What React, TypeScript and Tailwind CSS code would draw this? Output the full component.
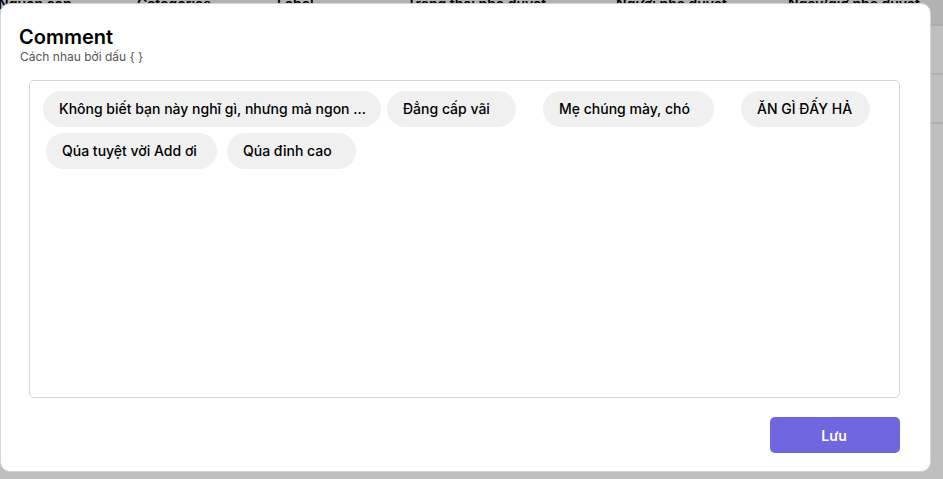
import React from 'react';

const columns = [
  { label: 'Nguồn cấp', width: 'w-[139px]' },
  { label: 'Categories', width: 'w-[140px]' },
  { label: 'Label', width: 'w-[130px]' },
  { label: 'Trạng thái phê duyệt', width: 'w-[209px]' },
  { label: 'Người phê duyệt', width: 'w-[172px]' },
  { label: 'Ngày/giờ phê duyệt', width: '' },
];

function Chip({ text, width }: { text: string; width: string }) {
  return (
    <li
      className={`flex h-9 shrink-0 items-center whitespace-nowrap rounded-full bg-[#f0f0f0] px-4 text-sm font-medium text-black ${width}`}
    >
      {text}
    </li>
  );
}

function BackgroundTable() {
  return (
    <div className="-ml-0.5">
      <table aria-hidden="true" className="w-full table-fixed border-collapse">
        <thead>
          <tr className="h-[25px] border-b-2 border-[#acacac] bg-[#b2b2b3]">
            {columns.map((column) => (
              <th
                key={column.label}
                className={`whitespace-nowrap p-0 text-left align-top text-sm leading-[8px] font-semibold text-black ${column.width}`}
              >
                {column.label}
              </th>
            ))}
          </tr>
        </thead>
        <tbody>
          <tr className="h-[49px] border-b-2 border-[#b0b0b0]">
            <td colSpan={6} />
          </tr>
          <tr className="h-[49px] border-b-2 border-[#b0b0b0]">
            <td colSpan={6} />
          </tr>
        </tbody>
      </table>
    </div>
  );
}

export default function App() {
  return (
    <main className="relative h-screen overflow-hidden bg-[#bfbfbf] font-['Inter','Liberation_Sans',sans-serif]">
      <BackgroundTable />
      <section
        role="dialog"
        aria-labelledby="comment-title"
        className="absolute top-[3px] right-3 bottom-[7px] left-0 flex flex-col rounded-[10px] border border-[#d4d4d4] bg-white pt-5 pr-[30px] pb-[18px] pl-7"
      >
        <header className="-ml-2.5">
          <h1 id="comment-title" className="text-xl leading-[26px] font-semibold text-black">
            Comment
          </h1>
          <p className="pl-px text-xs leading-[14px] text-[#555555]">Cách nhau bởi dấu {'{ }'}</p>
        </header>
        <div className="mt-4 flex flex-1 flex-col gap-1.5 rounded-[5px] border border-[#d6d6d6] px-[13px] py-2.5">
          <ul className="flex gap-[27px]">
            <li>
              <ul className="flex gap-1.5">
                <Chip text="Không biết bạn này nghĩ gì, nhưng mà ngon ..." width="w-[338px]" />
                <Chip text="Đẳng cấp vãi" width="w-[129px]" />
              </ul>
            </li>
            <Chip text="Mẹ chúng mày, chó" width="w-[171px]" />
            <Chip text="ĂN GÌ ĐẤY HẢ" width="w-[129px]" />
          </ul>
          <ul className="flex gap-2.5 pl-[3px]">
            <Chip text="Qúa tuyệt vời Add ơi" width="w-[171px]" />
            <Chip text="Qúa đỉnh cao" width="w-[129px]" />
          </ul>
        </div>
        <button
          type="button"
          className="mt-[19px] h-9 w-[130px] self-end rounded-[5px] bg-[#7066e0] pt-0.5 pr-0.5 text-sm font-semibold text-white"
        >
          Lưu
        </button>
      </section>
    </main>
  );
}
